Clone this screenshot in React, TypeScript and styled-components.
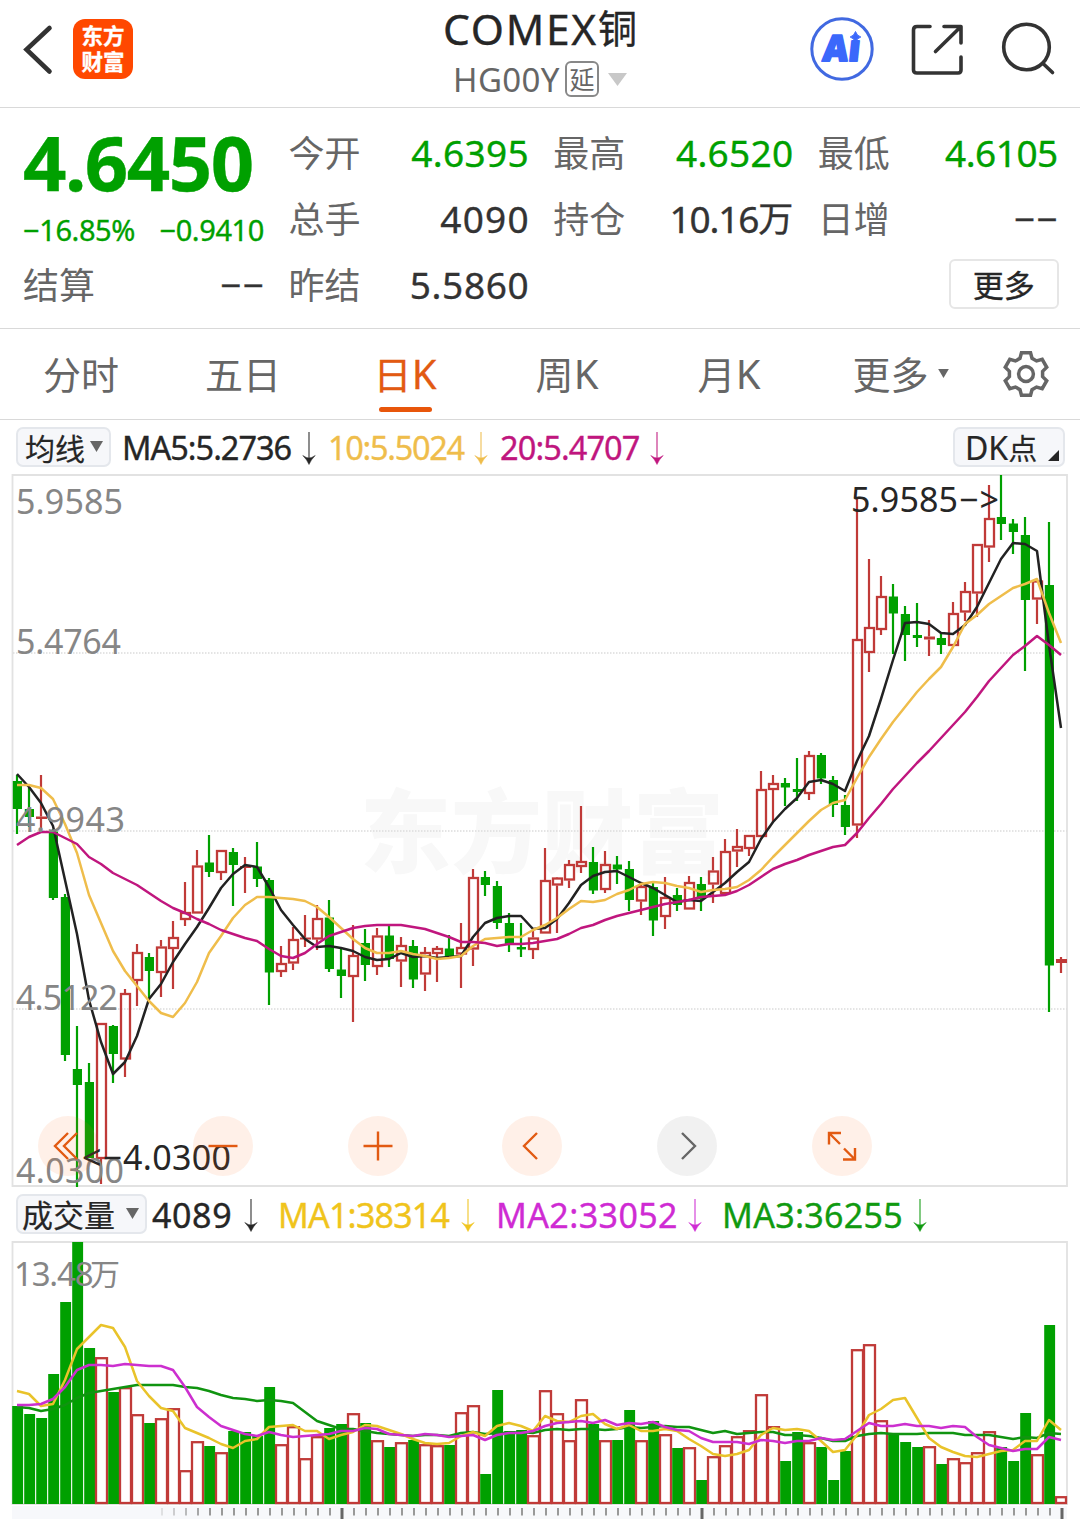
import React from "react";
import styled, { createGlobalStyle } from "styled-components";

const GREEN = "#00a000";
const RED = "#c03a38";
const ORANGE = "#e25a12";
const LATIN = `"Noto Sans", "Noto Sans CJK SC", sans-serif`;
const CJK = `"Noto Sans CJK SC", "Noto Sans", sans-serif`;

const Global = createGlobalStyle`
  * { box-sizing: border-box; }
  body { margin: 0; background: #fff; font-family: ${LATIN}; color: #2b2b2b; }
`;

/* ---------- data ---------- */

type Dir = "r" | "g";
// direction, high, body top, body bottom, low
type Candle = [Dir, number, number, number, number];

const candles: Candle[] = [
  ["g", 775, 781, 809, 834], ["g", 788, 809, 817, 827], ["r", 775, 816.5, 819, 829],
  ["g", 829, 831.5, 898, 900], ["g", 894, 897, 1055, 1061], ["g", 1026, 1069, 1085, 1187],
  ["g", 1063, 1082, 1158, 1158], ["r", 1023, 1023, 1159, 1184], ["g", 1025, 1026, 1054, 1083],
  ["r", 989, 993, 1059.5, 1077], ["r", 944, 952, 981, 1006], ["g", 953, 957, 971, 998],
  ["r", 940, 946.5, 973, 997], ["r", 921, 937, 949, 989], ["r", 882, 912, 920, 926],
  ["r", 850, 865.5, 913.5, 913], ["g", 835, 862.5, 872, 877], ["r", 850, 850, 873, 880],
  ["g", 848, 852, 865, 906], ["r", 857, 866, 868, 893], ["g", 842, 866.5, 879, 887],
  ["g", 878, 880, 972.5, 1005], ["r", 946, 963, 972, 977], ["r", 927, 939, 963.5, 970],
  ["r", 915, 937.5, 939.5, 947], ["r", 905, 918, 939.5, 950], ["g", 900, 917.5, 969, 972],
  ["g", 948, 969.5, 976, 998], ["r", 925, 955, 977, 1022], ["g", 929, 943, 965, 981],
  ["r", 928, 935.5, 967, 975], ["g", 925, 935.5, 959, 967], ["r", 937, 945, 961.5, 987],
  ["g", 940, 946, 979.5, 988], ["r", 947, 952, 974.5, 991], ["r", 946, 948, 954, 982],
  ["g", 935, 948.5, 957, 957], ["r", 923, 947, 954.5, 988], ["r", 869, 877, 949.5, 966],
  ["g", 871, 877, 885, 896], ["g", 881, 886, 923, 929], ["g", 913, 923, 944.5, 952],
  ["g", 923, 947, 949.5, 957], ["r", 930, 937.5, 950, 959], ["r", 848, 880, 933.5, 933],
  ["r", 877, 877.5, 885.5, 933], ["r", 860, 864, 880.5, 888], ["r", 806, 861, 867, 873],
  ["g", 847, 862, 890.5, 894], ["r", 851, 864, 890, 893], ["g", 856, 864.5, 869.5, 884],
  ["g", 861, 869, 900, 911], ["r", 883, 886, 901.5, 915], ["g", 883, 887, 920.5, 936],
  ["r", 877, 897, 917, 929], ["g", 888, 895, 905, 911], ["r", 876, 882, 909.5, 909],
  ["g", 877, 884, 899, 911], ["r", 857, 870.5, 884.5, 903], ["r", 839, 851, 894, 894],
  ["r", 829, 846, 851.5, 867], ["r", 835, 835, 849, 856], ["r", 771, 789, 837, 837],
  ["r", 775, 783, 790, 822], ["g", 778, 783, 787.5, 806], ["g", 758, 789, 792, 801],
  ["r", 751, 755, 794, 800], ["g", 753, 755, 778.5, 784], ["g", 776, 780, 805, 817],
  ["g", 795, 805, 827, 835], ["r", 498, 639, 825.5, 838], ["r", 559, 627, 653, 672],
  ["r", 576, 596, 630, 635], ["g", 584, 596.5, 613.5, 654], ["g", 606, 614, 635, 661],
  ["g", 603, 635, 638, 647], ["r", 620, 636.5, 639.5, 656], ["g", 633, 638, 645, 654],
  ["r", 602, 613, 646, 646], ["r", 582, 591, 612.5, 621], ["r", 544, 544, 593.5, 617],
  ["r", 485, 518, 547.5, 562], ["g", 475, 517, 524, 540], ["g", 519, 523.5, 532, 554],
  ["g", 517, 535, 600, 671], ["r", 580, 580.5, 599.5, 624], ["g", 522, 585, 965.5, 1012],
  ["r", 957, 959, 963, 973],
];

const ma5 = [
  774, 787, 803, 826, 880, 934, 1000, 1042, 1074, 1062, 1036, 999, 984, 962, 944, 927, 908, 888, 874, 865, 867, 887,
  910, 925, 939, 947, 946, 948, 951, 957, 960, 959, 953, 957, 956, 958, 957, 956, 937, 923, 918, 916, 916, 929,
  928, 919, 903, 885, 876, 872, 871, 877, 883, 888, 895, 902, 900, 901, 892, 883, 872, 862, 839, 822, 809, 798, 782,
  780, 784, 791, 761, 736, 699, 660, 623, 622, 624, 633, 634, 625, 607, 583, 559, 543, 544, 551, 645, 728,
];
const ma10 = [
  785, 785, 788, 799, 824, 853, 895, 923, 951, 971, 986, 1001, 1013, 1017, 1003, 982, 953, 936, 918, 905, 897, 897,
  898, 899, 901, 907, 917, 928, 939, 948, 953, 953, 951, 954, 956, 959, 958, 956, 946, 939, 938, 937, 937, 930,
  925, 918, 909, 901, 902, 900, 894, 890, 884, 882, 883, 886, 888, 892, 890, 889, 887, 880, 870, 857, 845, 833, 821,
  810, 803, 800, 778, 757, 739, 722, 707, 692, 679, 667, 647, 624, 615, 604, 596, 588, 584, 579, 613, 643,
];
const ma20 = [
  845, 837, 832, 832, 838, 844, 857, 864, 873, 879, 885, 893, 901, 908, 913, 919, 924, 930, 934, 938, 941, 949,
  956, 958, 953, 944, 936, 932, 928, 926, 925, 925, 925, 927, 929, 933, 937, 942, 942, 943, 946, 944, 944, 943,
  941, 939, 934, 928, 925, 920, 916, 913, 910, 907, 904, 902, 900, 897, 896, 895, 891, 885, 877, 869, 864, 860, 855,
  851, 847, 845, 833, 818, 804, 789, 776, 763, 751, 738, 725, 712, 697, 681, 668, 655, 646, 636, 645, 655,
];

const volumeTops = [
  1406, 1414, 1418, 1374, 1302, 1242, 1348, 1357, 1392, 1387, 1414, 1423, 1418, 1408, 1470, 1441, 1446, 1452, 1431,
  1432, 1436, 1387, 1444, 1426, 1458, 1436, 1428, 1424, 1413, 1423, 1440, 1447, 1442, 1440, 1444, 1445, 1445, 1412,
  1405, 1474, 1390, 1431, 1430, 1435, 1390, 1413, 1440, 1399, 1424, 1440, 1440, 1410, 1440, 1421, 1434, 1448, 1447,
  1480, 1456, 1445, 1436, 1430, 1394, 1426, 1461, 1432, 1442, 1447, 1480, 1451, 1349, 1344, 1420, 1433, 1442, 1447,
  1446, 1464, 1458, 1462, 1452, 1431, 1447, 1461, 1413, 1454, 1325, 1496,
];
const volumeDirs =
  "gggggggrgrrgrrrrgrggggrrrrggrgrgrgrrgrrggggrrrrrgrggrgrgrgrrrrrrggrgggrrrggg" + "rgrrrrgggrgr";

const volMa1 = [
  1391, 1394, 1406, 1404, 1380, 1349, 1337, 1325, 1328, 1347, 1381, 1396, 1408, 1411, 1428, 1433, 1438, 1444, 1448,
  1441, 1439, 1427, 1426, 1425, 1431, 1431, 1439, 1435, 1432, 1425, 1426, 1430, 1434, 1439, 1443, 1444, 1443, 1436,
  1432, 1436, 1426, 1423, 1426, 1431, 1416, 1421, 1422, 1416, 1414, 1424, 1429, 1425, 1431, 1431, 1429, 1431, 1439,
  1446, 1454, 1456, 1454, 1450, 1435, 1428, 1430, 1429, 1431, 1441, 1452, 1450, 1435, 1415, 1409, 1400, 1398, 1418,
  1438, 1447, 1452, 1456, 1457, 1454, 1451, 1450, 1441, 1441, 1420, 1430,
];
const volMa2 = [
  1405, 1405, 1404, 1399, 1387, 1370, 1365, 1365, 1366, 1364, 1365, 1366, 1366, 1370, 1387, 1407, 1417, 1426, 1430,
  1434, 1436, 1432, 1435, 1437, 1436, 1435, 1434, 1431, 1431, 1428, 1429, 1434, 1435, 1436, 1434, 1435, 1437, 1436,
  1435, 1440, 1435, 1433, 1433, 1431, 1426, 1423, 1422, 1421, 1423, 1420, 1425, 1423, 1424, 1422, 1427, 1430, 1431,
  1438, 1442, 1442, 1442, 1444, 1440, 1441, 1443, 1441, 1441, 1438, 1440, 1439, 1431, 1423, 1426, 1426, 1424, 1426,
  1426, 1428, 1426, 1427, 1437, 1445, 1448, 1451, 1449, 1449, 1437, 1440,
];
const volMa3 = [
  1407, 1408, 1411, 1409, 1405, 1398, 1393, 1391, 1389, 1387, 1385, 1385, 1385, 1385, 1387, 1388, 1391, 1395, 1398,
  1399, 1401, 1400, 1401, 1403, 1412, 1421, 1425, 1429, 1429, 1431, 1433, 1434, 1435, 1436, 1435, 1435, 1436, 1433,
  1432, 1434, 1433, 1433, 1432, 1433, 1430, 1429, 1430, 1429, 1429, 1430, 1429, 1427, 1428, 1427, 1426, 1427, 1427,
  1430, 1433, 1431, 1434, 1433, 1432, 1432, 1435, 1435, 1436, 1438, 1441, 1441, 1436, 1434, 1433, 1434, 1434, 1434,
  1433, 1433, 1433, 1435, 1435, 1435, 1437, 1439, 1437, 1438, 1433, 1434,
];

const slot = (i: number) => 17 + 12 * i;
const toPoints = (ys: number[]) => ys.map((y, i) => `${slot(i)},${y}`).join(" ");

/* ---------- layout ---------- */

const Screen = styled.main`
  width: 1080px;
  height: 1519px;
  overflow: hidden;
  display: flex;
  flex-direction: column;
  background: #fff;
  -webkit-text-stroke: 0.35px currentColor;
`;

const Header = styled.header`
  height: 108px;
  display: grid;
  grid-template-columns: 1fr auto 1fr;
  border-bottom: 1px solid #d9d9d9;
`;

const HeaderLeft = styled.div`
  display: flex;
  align-items: flex-start;
  gap: 19px;
  padding: 19px 0 0 22px;
`;

const HeaderRight = styled.div`
  display: flex;
  align-items: flex-start;
  justify-content: flex-end;
  padding: 16px 24px 0 0;
`;

const Logo = styled.div`
  width: 60px;
  height: 60px;
  border-radius: 12px;
  background: #ff4800;
  color: #fff;
  display: flex;
  flex-direction: column;
  align-items: center;
  justify-content: center;
  padding-bottom: 3px;
  font: 700 21.5px/26px ${CJK};
`;

const TitleBlock = styled.div`
  display: flex;
  flex-direction: column;
  align-items: center;
`;

const Title = styled.h1`
  margin: 0;
  height: 60px;
  font: 400 39px/57px ${CJK};
  color: #262626;
  white-space: nowrap;
`;

const Subtitle = styled.div`
  height: 38px;
  display: flex;
  align-items: center;
  font: 400 33px/38px ${LATIN};
  color: #666;
  -webkit-text-stroke-width: 0;
`;

const DelayTag = styled.span`
  width: 34px;
  height: 36px;
  margin: 0 9px 0 5px;
  border: 2px solid #888;
  border-radius: 6px;
  text-align: center;
  font: 400 25px/30px ${CJK};
`;

const Latin = styled.span<{ $size: number; $track?: number }>`
  font-family: ${LATIN};
  font-size: ${(p) => p.$size}px;
  letter-spacing: ${(p) => p.$track ?? 0}px;
  line-height: 1;
`;

const Han = styled.span<{ $size?: number; $lift?: number }>`
  font-family: ${CJK};
  font-size: ${(p) => (p.$size ? `${p.$size}px` : "inherit")};
  letter-spacing: 0;
  line-height: 1;
  vertical-align: ${(p) => p.$lift ?? 2}px;
`;

const Quote = styled.section`
  height: 221px;
  padding: 12px 22px 0 23px;
  display: grid;
  grid-template-columns: 241px 240px 240px 240px;
  grid-template-rows: 66px 66px 66px;
  column-gap: 24.6px;
  border-bottom: 1px solid #d9d9d9;
`;

const PriceCell = styled.div`
  grid-row: span 2;
  color: ${GREEN};
`;

const Price = styled.div`
  height: 92px;
  font: 700 76px/83px ${LATIN};
  letter-spacing: -1.5px;
`;

const Change = styled.div`
  display: flex;
  justify-content: space-between;
  font: 400 29px/36px ${LATIN};
  letter-spacing: -0.4px;
`;

const Cell = styled.div`
  display: flex;
  align-items: center;
  justify-content: space-between;
`;

const Label = styled.span`
  font: 400 36px/62px ${CJK};
  height: 66px;
  color: #666;
  -webkit-text-stroke-width: 0;
`;

const Value = styled.span<{ $down?: boolean; $track?: number }>`
  font: 400 37px/66px ${LATIN};
  letter-spacing: ${(p) => p.$track ?? 0.3}px;
  margin-right: -${(p) => Math.max(p.$track ?? 0.3, 0)}px;
  color: ${(p) => (p.$down ? GREEN : "#333")};
`;

const MoreCell = styled.div`
  grid-column: 4;
  display: flex;
  justify-content: flex-end;
  align-items: center;
`;

const MoreButton = styled.button`
  width: 110px;
  height: 50px;
  margin: 0 -1px 2px 0;
  padding: 0;
  border: 2px solid #e6e6e6;
  border-radius: 6px;
  background: #fff;
  color: #262626;
  font: 400 31px/42px ${CJK};
`;

const Tabs = styled.nav`
  height: 91px;
  display: flex;
  border-bottom: 1px solid #d9d9d9;
`;

const Tab = styled.div<{ $active?: boolean; $shift?: number }>`
  width: 162px;
  padding: 8px 0 0 ${(p) => p.$shift ?? 0}px;
  display: flex;
  flex-direction: column;
  align-items: center;
  font: 400 38px/78px ${CJK};
  white-space: nowrap;
  color: ${(p) => (p.$active ? ORANGE : "#666")};
  -webkit-text-stroke-width: ${(p) => (p.$active ? 0.3 : 0)}px;
`;

const TabLabel = styled.div`
  height: 70px;
  display: flex;
  align-items: baseline;
  line-height: 72px;
`;

const Underline = styled.div`
  width: 53px;
  height: 5px;
  border-radius: 3px;
  background: #e8560b;
`;

const GearSlot = styled.div`
  width: 108px;
  display: flex;
  justify-content: center;
  padding-top: 21px;
`;

const Legend = styled.div<{ $h: number }>`
  height: ${(p) => p.$h}px;
  padding: 0 15px 0 16px;
  display: flex;
  align-items: center;
`;

const Chip = styled.div<{ $w: number; $pad: string; $size?: number }>`
  width: ${(p) => p.$w}px;
  height: 40px;
  border: 2px solid #e4e7ec;
  border-radius: 7px;
  background: #f6f7fa;
  color: #262626;
  font: 400 ${(p) => p.$size ?? 30}px/34px ${CJK};
  display: flex;
  align-items: center;
  justify-content: space-between;
  padding: ${(p) => p.$pad};
  white-space: nowrap;
  -webkit-text-stroke-width: 0.2px;
`;

const Reading = styled.div<{ $w: number; $color: string; $track: number; $size?: number }>`
  width: ${(p) => p.$w}px;
  padding-top: 2px;
  display: flex;
  align-items: center;
  justify-content: space-between;
  color: ${(p) => p.$color};
  font: 400 ${(p) => p.$size ?? 32.5}px/40px ${LATIN};
  letter-spacing: ${(p) => p.$track}px;
  white-space: nowrap;
`;

const Gap = styled.span<{ $w?: number }>`
  flex: ${(p) => (p.$w ? `0 0 ${p.$w}px` : "1")};
`;

const ChartBox = styled.section<{ $h: number }>`
  position: relative;
  height: ${(p) => p.$h}px;
`;

const Plot = styled.svg`
  display: block;
  overflow: visible;
`;

const Controls = styled.div`
  position: absolute;
  left: 38px;
  right: 208px;
  bottom: 11px;
  display: flex;
  justify-content: space-between;
`;

const RoundButton = styled.div<{ $muted?: boolean }>`
  width: 60px;
  height: 60px;
  border-radius: 50%;
  background: ${(p) => (p.$muted ? "rgba(80,80,80,.08)" : "rgba(255,105,25,.1)")};
  color: ${(p) => (p.$muted ? "#666" : ORANGE)};
`;

/* ---------- drawings ---------- */

const DownArrow = () => (
  <svg width="14" height="34" viewBox="0 0 14 34">
    <path d="M7 1V30" stroke="currentColor" strokeWidth="1.6" opacity=".65" />
    <path d="M.8 24.5Q4.5 27 7 27Q9.5 27 13.2 24.5Q9.5 28 7 33.5Q4.5 28 .8 24.5Z" fill="currentColor" stroke="currentColor" strokeWidth=".5" />
  </svg>
);

const Triangle = ({ w, h, color }: { w: number; h: number; color: string }) => (
  <svg width={w} height={h} viewBox="0 0 10 10" preserveAspectRatio="none">
    <path d="M0 0H10L5 10Z" fill={color} />
  </svg>
);

const gearPath = () => {
  const pts: string[] = [];
  const at = (deg: number, r: number) => {
    const a = (deg * Math.PI) / 180;
    pts.push(`${(24 + r * Math.cos(a)).toFixed(2)} ${(24 + r * Math.sin(a)).toFixed(2)}`);
  };
  for (let k = 0; k < 6; k++) {
    const c = -90 + 60 * k;
    at(c - 21, 16.8);
    at(c - 12, 21.8);
    at(c + 12, 21.8);
    at(c + 21, 16.8);
  }
  return `M${pts.join("L")}Z`;
};

const Gear = () => (
  <svg width="48" height="48" viewBox="0 0 48 48" fill="none" stroke="#666" strokeWidth="3.5" strokeLinejoin="miter">
    <path d={gearPath()} />
    <circle cx="24" cy="24" r="7.4" />
  </svg>
);

const PriceChart = () => (
  <Plot width="1080" height="713" viewBox="0 474 1080 713">
    <text
      x="360"
      y="866"
      fontSize="91"
      fontWeight="900"
      fontFamily={CJK}
      fill="#f8f8f8"
      textLength="364"
      lengthAdjust="spacingAndGlyphs"
    >
      东方财富
    </text>
    <path d="M12.5 475H1067V1186H12.5Z" fill="none" stroke="#e2e2e2" strokeWidth="1.8" />
    {[653, 831, 1009].map((y) => (
      <path key={y} d={`M13 ${y}H1067`} stroke="#dcdcdc" strokeWidth="1.5" strokeDasharray="1.5 1.5" />
    ))}
    {candles.map(([dir, high, top, bottom, low], i) => {
      const x = slot(i);
      if (dir === "g") {
        return (
          <g key={i} fill={GREEN}>
            <rect x={x - 1.1} y={high} width="2.2" height={low - high} />
            <rect x={x - 4.2} y={top} width="9.2" height={bottom - top} />
          </g>
        );
      }
      const flat = bottom - top < 5;
      return (
        <g key={i} fill={RED}>
          {high < top && <rect x={x - 1.1} y={high} width="2.2" height={top - high} />}
          {low > bottom && <rect x={x - 1.1} y={bottom} width="2.2" height={low - bottom} />}
          {flat ? (
            <rect x={x - 5} y={top} width="11" height={bottom - top} />
          ) : (
            <rect x={x - 4} y={top + 1} width="9" height={bottom - top - 2} fill="none" stroke={RED} strokeWidth="2.3" />
          )}
        </g>
      );
    })}
    <g fill="none" strokeWidth="2.5" strokeLinejoin="round">
      <polyline points={toPoints(ma5)} stroke="#222" />
      <polyline points={toPoints(ma10)} stroke="#efbd4b" />
      <polyline points={toPoints(ma20)} stroke="#c0167e" />
    </g>
    <g fontFamily={LATIN} fontSize="34" fill="#868686">
      <text x="16" y="513.5" textLength="107">5.9585</text>
      <text x="16" y="653.5" textLength="105">5.4764</text>
      <text x="16" y="831.5" textLength="109">4.9943</text>
      <text x="16" y="1009.5" textLength="102">4.5122</text>
      <text x="16" y="1183" textLength="108">4.0300</text>
    </g>
    <g fontFamily={LATIN} fontSize="34" fill="#262626">
      <text x="851" y="511.5" textLength="107">5.9585</text>
      <text x="959" y="511.5" textLength="40">−&gt;</text>
      <text x="82" y="1169.5" textLength="40">&lt;−</text>
      <text x="123" y="1169.5" textLength="108">4.0300</text>
    </g>
  </Plot>
);

const VolumeChart = () => (
  <Plot width="1080" height="278" viewBox="0 1241 1080 278">
    <path d="M12.5 1504V1242H1067V1504Z" fill="none" stroke="#e2e2e2" strokeWidth="1.8" />
    <rect x="12" y="1506" width="1055" height="13" fill="#f7f8fb" />
    {volumeTops.map((top, i) =>
      volumeDirs[i] === "g" ? (
        <rect key={i} x={12.2 + 12 * i} y={top} width="10.9" height={1504 - top} fill={GREEN} />
      ) : (
        <rect
          key={i}
          x={12 + 12 * i}
          y={top + 1.2}
          width={i === 87 ? 10 : 11}
          height={1504 - top - 2.2}
          fill="#fff"
          stroke={RED}
          strokeWidth="2.3"
        />
      ),
    )}
    <g fill="none" strokeWidth="2.5" strokeLinejoin="round">
      <polyline points={toPoints(volMa3)} stroke="#109410" />
      <polyline points={toPoints(volMa1)} stroke="#e9c32a" />
      <polyline points={toPoints(volMa2)} stroke="#cc2fcf" />
    </g>
    <g fill="#868686">
      <text x="14" y="1285.5" fontFamily={LATIN} fontSize="33" letterSpacing="-1.2">13.48</text>
      <text x="90" y="1285" fontFamily={CJK} fontSize="30">万</text>
    </g>
    {Array.from({ length: 76 }, (_, k) => {
      const major = k === 15 || k === 45 || k === 75;
      return (
        <rect
          key={k}
          x={major ? 160.5 + 12 * k : 161 + 12 * k}
          y="1508"
          width={major ? 3 : 2}
          height={major ? 11 : 7.5}
          fill={major ? "#666" : "#999"}
          opacity={k < 4 ? 0.25 + 0.2 * k : 1}
        />
      );
    })}
  </Plot>
);

const controlPaths = [
  "M30 17L17 30L30 43M39 17L26 30L39 43",
  "M15.5 30H44.5",
  "M15.5 30H44.5M30 15.5V44.5",
  "M35 17L22 30L35 43",
  "M25 17L38 30L25 43",
  "M17 28.5V17H29M17 17L28 28M43 32V43.5H31M43 43.5L32 32.5",
];

export default function App() {
  return (
    <Screen>
      <Global />
      <Header>
        <HeaderLeft>
          <svg width="32" height="60" viewBox="22 19 32 60">
            <path d="M49.5 28L26.5 49.5L49.5 71.5" fill="none" stroke="#333" strokeWidth="4.6" strokeLinecap="round" />
          </svg>
          <Logo>
            <span>东方</span>
            <span>财富</span>
          </Logo>
        </HeaderLeft>
        <TitleBlock>
          <Title>
            <Latin $size={42.5} $track={1.7}>COMEX</Latin><Han>铜</Han>
          </Title>
          <Subtitle>
            <Latin $size={33} $track={0.4}>HG00Y</Latin>
            <DelayTag>延</DelayTag>
            <Triangle w={19} h={13} color="#c8c8c8" />
          </Subtitle>
        </TitleBlock>
        <HeaderRight>
          <svg width="248" height="66" viewBox="808 16 248 66" fill="none">
            <circle cx="842" cy="49" r="30.2" stroke="#4169e1" strokeWidth="3" />
            <g
              transform="translate(822 61) skewX(-6)"
              fontFamily={LATIN}
              fontWeight="900"
              fontSize="36"
              fill="#3b68fb"
              stroke="#3b68fb"
              strokeWidth="2"
              strokeLinejoin="round"
            >
              <text x="0" y="0" textLength="25" lengthAdjust="spacingAndGlyphs">A</text>
              <text x="25.5" y="0">ı</text>
            </g>
            <path d="M855.5 31.5Q856.7 35.800 860.800 37Q856.700 38.200 855.500 42.500Q854.300 38.200 850.200 37Q854.300 35.800 855.500 31.500Z" fill="#3b68fb" stroke="#3b68fb" strokeWidth="1" />
            <g stroke="#333" strokeWidth="3.6" strokeLinecap="round" strokeLinejoin="round">
              <path d="M930 26.5H917Q913.5 26.5 913.5 30V70Q913.5 73 917 73H958Q961 73 961 70V57" />
              <path d="M944 26.5H961V43M960 27.5L935.5 51.5" />
              <circle cx="1026.5" cy="47" r="22.8" />
              <path d="M1043 63.500L1052.500 72.500" />
            </g>
          </svg>
        </HeaderRight>
      </Header>

      <Quote>
        <PriceCell>
          <Price>4.6450</Price>
          <Change>
            <span>−16.85%</span>
            <span>−0.9410</span>
          </Change>
        </PriceCell>
        <Cell><Label>今开</Label><Value $down>4.6395</Value></Cell>
        <Cell><Label>最高</Label><Value $down>4.6520</Value></Cell>
        <Cell><Label>最低</Label><Value $down $track={-0.5}>4.6105</Value></Cell>
        <Cell><Label>总手</Label><Value $track={1.2}>4090</Value></Cell>
        <Cell><Label>持仓</Label><Value $track={-1.2}>10.16<Han $size={35} $lift={1}>万</Han></Value></Cell>
        <Cell><Label>日增</Label><Value $track={1.5}>−−</Value></Cell>
        <Cell><Label>结算</Label><Value $track={1.5}>−−</Value></Cell>
        <Cell><Label>昨结</Label><Value $track={0.6}>5.5860</Value></Cell>
        <MoreCell><MoreButton>更多</MoreButton></MoreCell>
      </Quote>

      <Tabs>
        <Tab><TabLabel>分时</TabLabel></Tab>
        <Tab><TabLabel>五日</TabLabel></Tab>
        <Tab $active>
          <TabLabel>日<Latin $size={40}>K</Latin></TabLabel>
          <Underline />
        </Tab>
        <Tab><TabLabel>周<Latin $size={40}>K</Latin></TabLabel></Tab>
        <Tab><TabLabel>月<Latin $size={40}>K</Latin></TabLabel></Tab>
        <Tab $shift={20}>
          <TabLabel>
            更多
            <Gap $w={8} />
            <svg width="13" height="20" viewBox="0 0 13 20"><path d="M0 -2H13L6.5 9Z" fill="#666" /></svg>
          </TabLabel>
        </Tab>
        <GearSlot><Gear /></GearSlot>
      </Tabs>

      <Legend $h={54}>
        <Chip $w={95} $pad="0 6px 1px 7px">
          <span>均线</span>
          <Triangle w={13} h={11} color="#666" />
        </Chip>
        <Gap $w={11} />
        <Reading $w={194} $color="#262626" $track={-1}>MA5:5.2736<DownArrow /></Reading>
        <Gap $w={12} />
        <Reading $w={160} $color="#efbd4b" $track={-1.3}>10:5.5024<DownArrow /></Reading>
        <Gap $w={12} />
        <Reading $w={164} $color="#c0167e" $track={-0.9}>20:5.4707<DownArrow /></Reading>
        <Gap />
        <Chip $w={112} $pad="0 4px 0 10px" $size={29}>
          <span><Latin $size={32}>DK</Latin>点</span>
          <svg width="11" height="34" viewBox="0 0 11 34"><path d="M11 20V31H0Z" fill="#262626" /></svg>
        </Chip>
      </Legend>

      <ChartBox $h={713}>
        <PriceChart />
        <Controls>
          {controlPaths.map((d, i) => (
            <RoundButton key={d} $muted={i === 4}>
              <svg width="60" height="60" viewBox="0 0 60 60">
                <path d={d} fill="none" stroke="currentColor" strokeWidth="2.4" />
              </svg>
            </RoundButton>
          ))}
        </Controls>
      </ChartBox>

      <Legend $h={54}>
        <Chip $w={131} $pad="0 6px 1px 4px" $size={31}>
          <span>成交量</span>
          <Triangle w={13} h={11} color="#666" />
        </Chip>
        <Gap $w={5} />
        <Reading $w={106} $color="#262626" $track={0.6} $size={34}>4089<DownArrow /></Reading>
        <Gap $w={20} />
        <Reading $w={197} $color="#f0c41c" $track={-0.8} $size={34}>MA1:38314<DownArrow /></Reading>
        <Gap $w={21} />
        <Reading $w={206} $color="#cf2bd3" $track={0.4} $size={34}>MA2:33052<DownArrow /></Reading>
        <Gap $w={20} />
        <Reading $w={205} $color="#109a10" $track={0.3} $size={34}>MA3:36255<DownArrow /></Reading>
      </Legend>

      <ChartBox $h={278}>
        <VolumeChart />
      </ChartBox>
    </Screen>
  );
}
